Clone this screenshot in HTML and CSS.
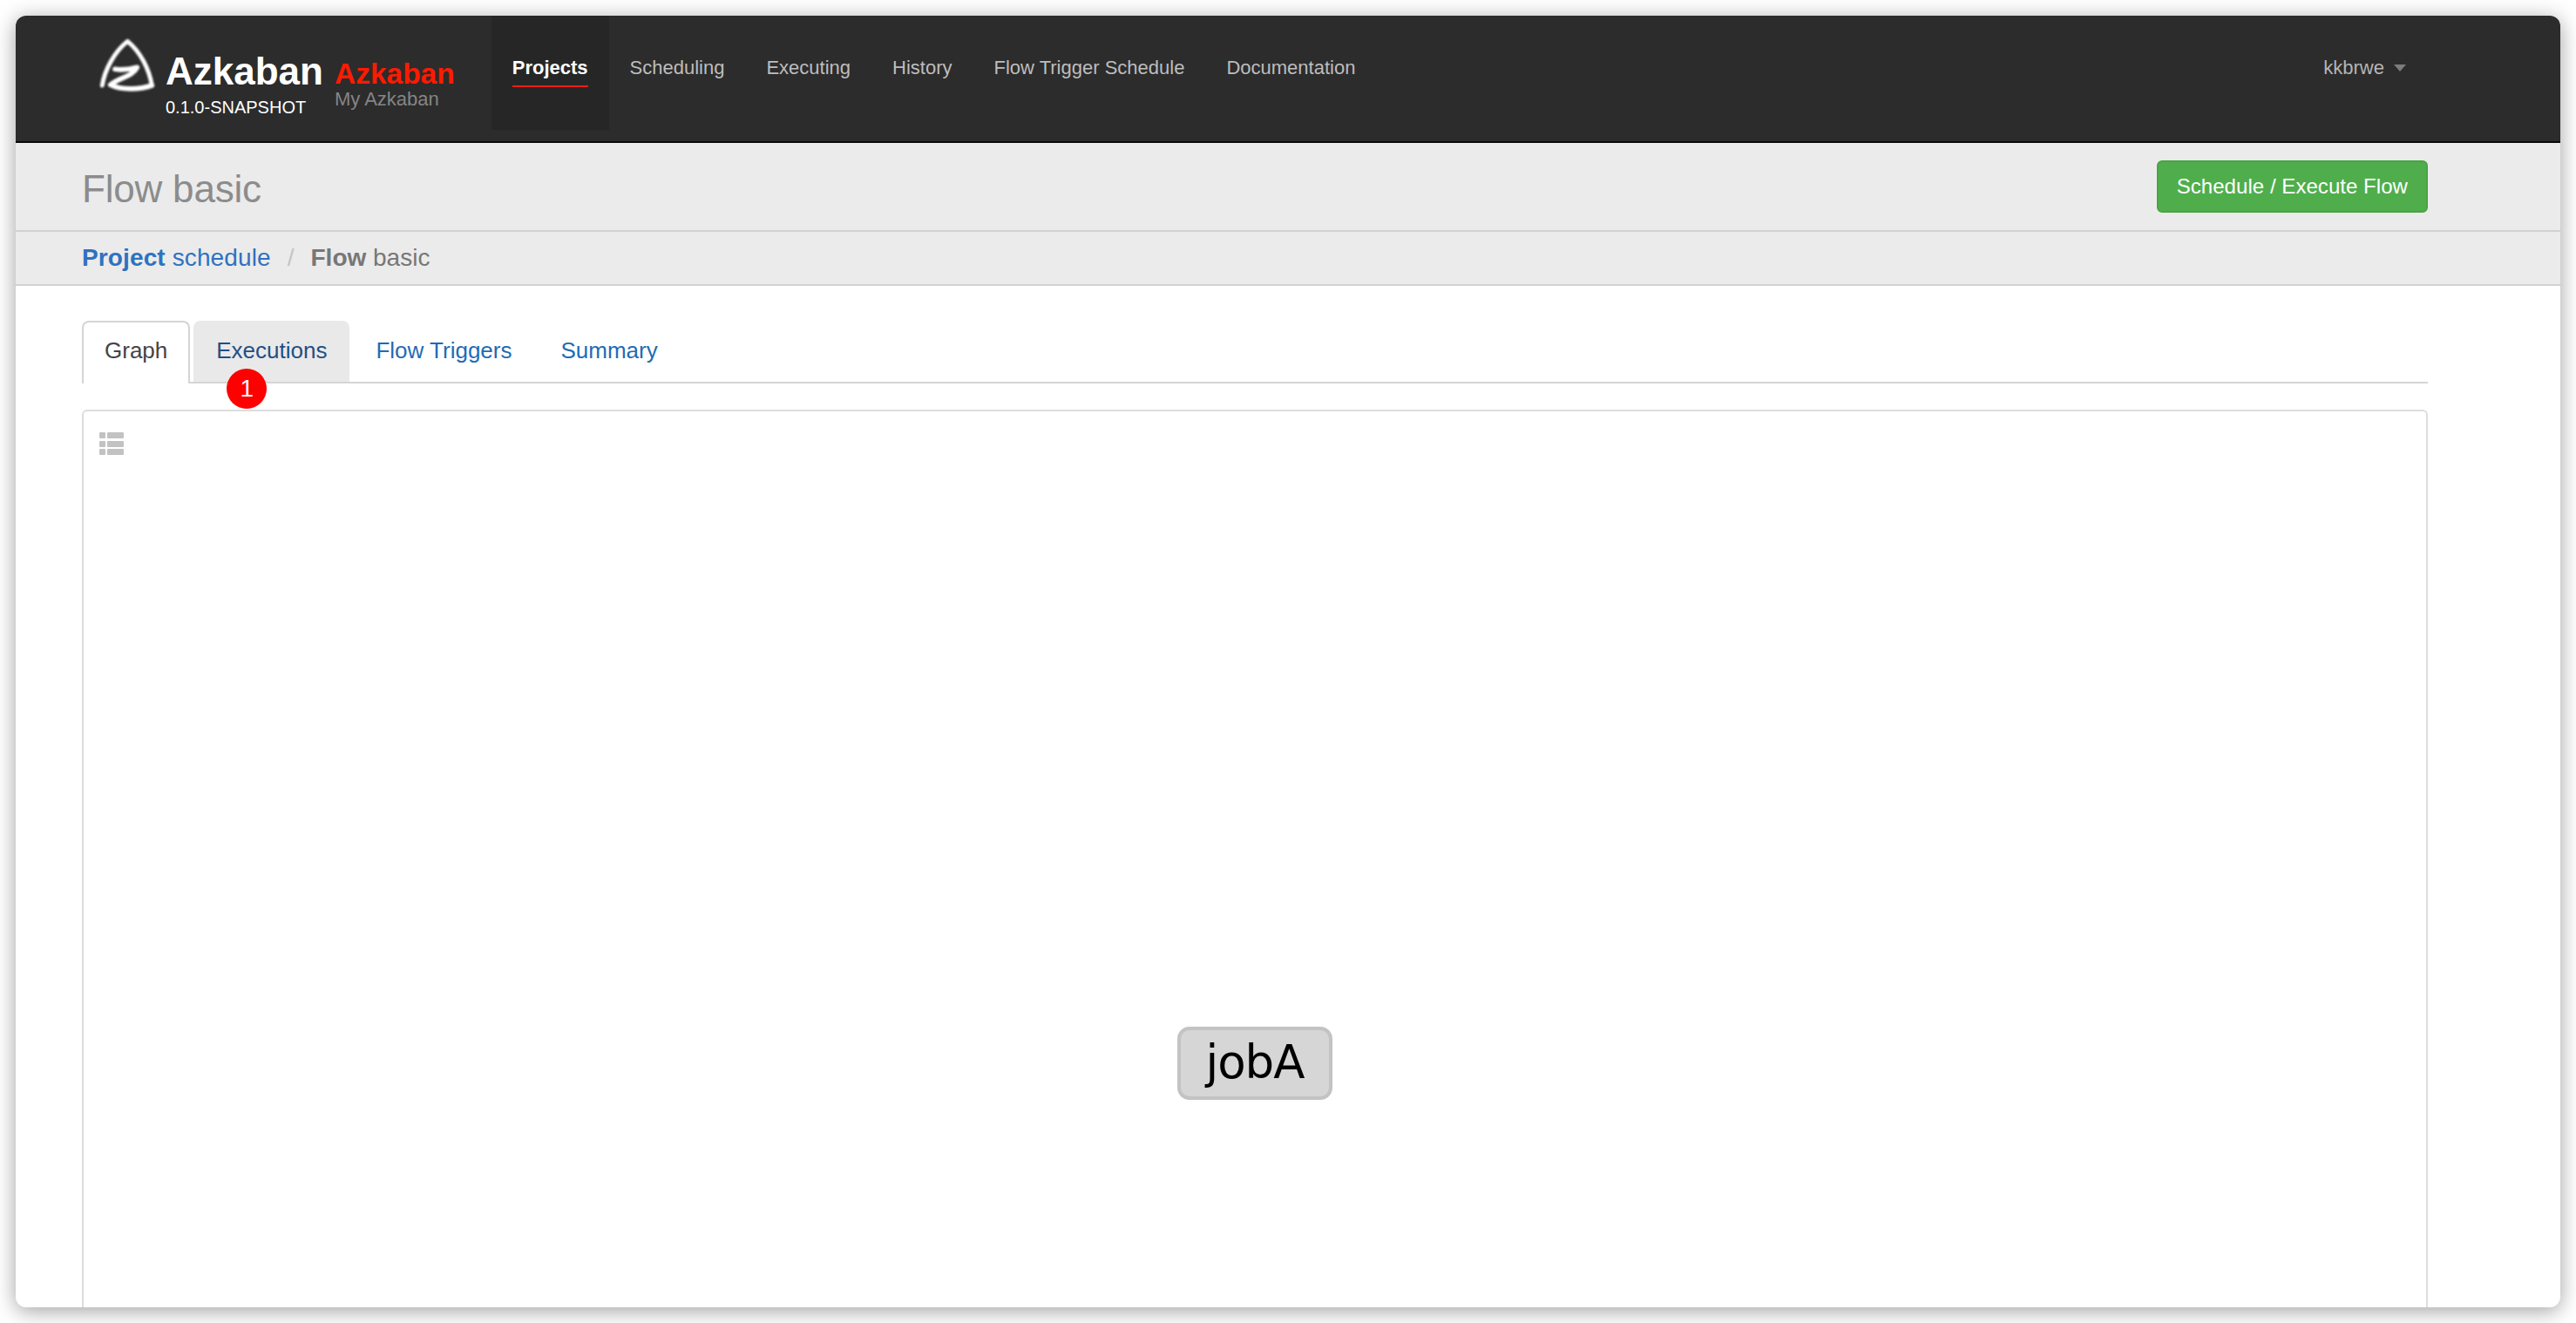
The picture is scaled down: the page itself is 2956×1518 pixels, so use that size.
FILE: index.html
```html
<!DOCTYPE html>
<html lang="en">
<head>
<meta charset="UTF-8" />
<title>Flow basic</title>
<link rel="stylesheet" href="styles.css">
</head>
<body>
  <div class="window">
    <header class="navbar">
      <svg class="logo" viewBox="0 0 222 210" aria-label="Azkaban logo">
        <path class="logo-line" d="M28 174 C36 120 70 58 115 22 C 160 58 190 120 199 174" />
        <path class="logo-line heavy" d="M72 118 C95 122 125 118 148 112 C 130 146 85 146 56 172 C 95 192 160 188 199 174" />
      </svg>
      <div class="brand">
        <div class="brand-name">Azkaban</div>
        <div class="brand-version">0.1.0-SNAPSHOT</div>
      </div>
      <div class="site">
        <div class="site-name">Azkaban</div>
        <div class="site-desc">My Azkaban</div>
      </div>
      <ul class="nav">
        <li class="nav-item active"><a href="#">Projects</a></li>
        <li class="nav-item"><a href="#">Scheduling</a></li>
        <li class="nav-item"><a href="#">Executing</a></li>
        <li class="nav-item"><a href="#">History</a></li>
        <li class="nav-item"><a href="#">Flow Trigger Schedule</a></li>
        <li class="nav-item"><a href="#">Documentation</a></li>
      </ul>
      <div class="user">kkbrwe<span class="caret"></span></div>
    </header>

    <div class="page-header">
      <h1>Flow basic</h1>
      <a class="btn-success" href="#">Schedule / Execute Flow</a>
    </div>

    <div class="crumbs">
      <a href="#"><b>Project</b> schedule</a>
      <span class="crumb-sep">/</span>
      <span class="crumb-current"><b>Flow</b> basic</span>
    </div>

    <div class="content">
      <ul class="tabs">
        <li class="tab active"><a href="#">Graph</a></li>
        <li class="tab hover">
          <a href="#">Executions</a>
          <span class="badge">1</span>
        </li>
        <li class="tab"><a href="#">Flow Triggers</a></li>
        <li class="tab"><a href="#">Summary</a></li>
      </ul>

      <div class="graph-panel">
        <div class="list-icon">
          <i></i><i></i>
          <i></i><i></i>
          <i></i><i></i>
        </div>
        <div class="job-node">jobA</div>
      </div>
    </div>
  </div>
</body>
</html>
```

FILE: styles.css
```css
/* Reset and base */
*, *::before, *::after {
  box-sizing: border-box;
}
html, body {
  height: 100%;
}
body {
  margin: 0;
  padding: 18px;
  background: #fff;
  overflow: hidden;
  font-family: "Liberation Sans", Arial, sans-serif;
}
a {
  text-decoration: none;
}
ul {
  list-style: none;
  margin: 0;
  padding: 0;
}

.window {
  height: 1482px;
  background: #fff;
  border-radius: 12px;
  overflow: hidden;
  box-shadow: 0 4px 24px rgba(0, 0, 0, 0.38);
  display: flex;
  flex-direction: column;
}

/* Top bar */
.navbar {
  flex: none;
  height: 146px;
  display: flex;
  align-items: flex-start;
  padding-left: 90px;
  padding-right: 177px;
  background: #2c2c2c;
  border-bottom: 2px solid #0a0a0a;
}
.logo {
  flex: none;
  width: 74px;
  height: 70px;
  margin-top: 22px;
  filter: blur(0.8px);
}
.logo-line {
  fill: none;
  stroke: #fff;
  stroke-width: 15;
  stroke-linecap: round;
  stroke-linejoin: round;
}
.logo-line.heavy {
  stroke-width: 17;
}
.brand {
  margin-left: 8px;
  padding-top: 40px;
  color: #fff;
}
.brand-name {
  font-size: 44px;
  line-height: 48px;
  font-weight: 700;
}
.brand-version {
  margin-top: 5px;
  font-size: 20px;
  line-height: 24px;
  font-weight: 400;
}
.site {
  margin-left: 13px;
  padding-top: 49px;
}
.site-name {
  font-size: 33.5px;
  line-height: 36px;
  font-weight: 700;
  color: #fc1b00;
}
.site-desc {
  margin-top: -1px;
  font-size: 22px;
  line-height: 24px;
  color: #858585;
}
.nav {
  display: flex;
  margin-left: 42px;
}
.nav-item {
  height: 131px;
  padding: 47px 24px 0;
}
.nav-item a {
  display: block;
  padding-bottom: 7px;
  font-size: 22px;
  line-height: 26px;
  color: #bdbdbd;
}
.nav-item.active {
  background: #262626;
}
.nav-item.active a {
  color: #fff;
  font-weight: 700;
  border-bottom: 2px solid #f01e14;
}
.user {
  display: flex;
  align-items: center;
  margin-left: auto;
  padding-top: 47px;
  font-size: 22px;
  line-height: 26px;
  color: #b5b5b5;
}
.caret {
  margin-left: 11px;
  border-top: 8px solid #7c7c7c;
  border-left: 7.5px solid transparent;
  border-right: 7.5px solid transparent;
}

/* Page header */
.page-header {
  flex: none;
  height: 102px;
  display: flex;
  align-items: center;
  justify-content: space-between;
  padding: 0 152px 0 76px;
  background: #ebebeb;
  border-bottom: 2px solid #d2d2d2;
}
h1 {
  margin: 5px 0 0;
  font-size: 44px;
  line-height: 48px;
  font-weight: 400;
  letter-spacing: -0.2px;
  color: #8c8c8c;
}
.btn-success {
  height: 60px;
  padding: 0 21px;
  line-height: 56px;
  font-size: 24px;
  letter-spacing: 0.05px;
  color: #fff;
  background: #4fae4b;
  border: 2px solid #49a345;
  border-radius: 6px;
}

/* Breadcrumb */
.crumbs {
  flex: none;
  height: 62px;
  display: flex;
  align-items: center;
  padding-left: 76px;
  font-size: 28px;
  line-height: 60px;
  background: #ebebeb;
  border-bottom: 2px solid #d2d2d2;
}
.crumbs a {
  letter-spacing: 0.12px;
  color: #2f72c0;
}
.crumb-sep {
  margin: 0 19px;
  color: #c4c4c4;
}
.crumb-current {
  color: #777;
}

/* Tabs */
.content {
  flex: 1;
  padding: 40px 152px 0 76px;
}
.tabs {
  display: flex;
  gap: 4px;
  border-bottom: 2px solid #d5d5d5;
}
.tab {
  position: relative;
  margin-bottom: -2px;
  border: 2px solid transparent;
  border-bottom: 0;
  border-radius: 8px 8px 0 0;
}
.tab a {
  display: block;
  padding: 14px 24px 20px;
  font-size: 26px;
  line-height: 36px;
  color: #1f6bb5;
}
.tab.active {
  background: #fff;
  border-color: #d5d5d5;
}
.tab.active a {
  color: #444;
}
.tab.hover {
  margin-bottom: 0;
  background: #e9e9e9;
}
.tab.hover a {
  padding-bottom: 18px;
  color: #1f4f85;
}
.badge {
  position: absolute;
  left: 36px;
  top: 53px;
  width: 46px;
  height: 46px;
  border-radius: 50%;
  background: #f00;
  color: #fff;
  font-size: 28px;
  line-height: 46px;
  text-align: center;
}

/* Graph panel */
.graph-panel {
  position: relative;
  height: 1200px;
  margin-top: 30px;
  border: 2px solid #ddd;
  border-radius: 6px;
  background: #fff;
}
.list-icon {
  display: grid;
  grid-template-columns: 7px 19px;
  grid-auto-rows: 7px;
  gap: 2.5px 2px;
  width: 28px;
  margin: 24px 0 0 18px;
}
.list-icon i {
  background: #c2c2c2;
  border-radius: 1px;
}
.job-node {
  position: absolute;
  left: 1255px;
  top: 706px;
  width: 178px;
  height: 84px;
  background: #d6d6d6;
  border: 4px solid #c3c3c3;
  border-radius: 14px;
  font-family: "DejaVu Sans", sans-serif;
  font-size: 53px;
  letter-spacing: -1px;
  line-height: 74px;
  text-align: center;
  color: #000;
}
```
